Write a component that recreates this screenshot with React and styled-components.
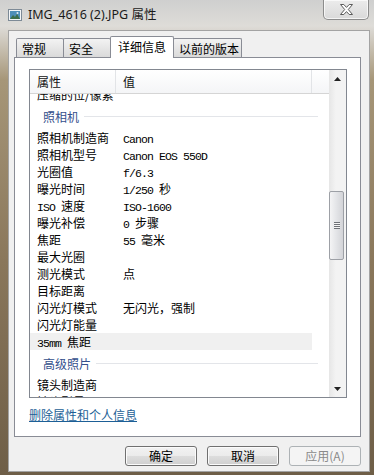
import React from 'react'
import styled, { createGlobalStyle } from 'styled-components'

const cjk = '"Noto Sans CJK SC", "Noto Sans", sans-serif'

const GlobalStyle = createGlobalStyle`
  html, body {
    margin: 0;
    padding: 0;
  }
  body {
    width: 374px;
    height: 475px;
    overflow: hidden;
    font-family: ${cjk};
  }
  * {
    box-sizing: border-box;
  }
`

const rows = [
  { name: '照相机制造商', value: 'Canon' },
  { name: '照相机型号', value: 'Canon EOS 550D' },
  { name: '光圈值', value: 'f/6.3' },
  { name: '曝光时间', value: '1/250 秒' },
  { name: 'ISO 速度', value: 'ISO-1600' },
  { name: '曝光补偿', value: '0 步骤' },
  { name: '焦距', value: '55 毫米' },
  { name: '最大光圈', value: '' },
  { name: '测光模式', value: '点' },
  { name: '目标距离', value: '' },
  { name: '闪光灯模式', value: '无闪光，强制' },
  { name: '闪光灯能量', value: '' },
  { name: '35mm 焦距', value: '', hot: true },
]

const tabs = [
  { label: '常规', width: 48 },
  { label: '安全', width: 48 },
  { label: '详细信息', width: 64, active: true },
  { label: '以前的版本', width: 69 },
]

// wrap ascii runs so they get the narrow fixed-width face
function mixed(text) {
  return text
    .split(/([\x20-\x7e]+)/)
    .filter(Boolean)
    .map((part, i) => (/^[\x20-\x7e]+$/.test(part) ? <Latin key={i}>{part}</Latin> : part))
}

function App() {
  return (
    <>
      <GlobalStyle />
      <Window>
        <TitleBar>
          <TitleIcon width='14' height='12' viewBox='0 0 14 12'>
            <rect x='0.5' y='0.5' width='13' height='11' fill='#f4f6f8' stroke='#7d8a96' />
            <rect x='2' y='2' width='10' height='8' fill='#4f8fb8' />
            <path d='M2 10 L5 6 L7 8 L9 5 L12 10 Z' fill='#3f6f4a' />
            <circle cx='9.5' cy='4' r='1' fill='#e8eef2' />
          </TitleIcon>
          <TitleText>IMG_4616 (2).JPG 属性</TitleText>
          <CloseButton>
            <svg width='15' height='11' viewBox='0 0 15 11'>
              <path
                d='M1.5 0.5 L4.8 0.5 L7.5 3.4 L10.2 0.5 L13.5 0.5 L9.3 5.5 L13.5 10.5 L10.2 10.5 L7.5 7.6 L4.8 10.5 L1.5 10.5 L5.7 5.5 Z'
                fill='#ffffff'
                stroke='#5a5a5a'
                strokeWidth='1'
                strokeLinejoin='round'
              />
            </svg>
          </CloseButton>
        </TitleBar>
        <Client>
          <TabStrip>
            {tabs.map((t) => (
              <Tab key={t.label} $width={t.width} $active={t.active}>
                {t.label}
              </Tab>
            ))}
          </TabStrip>
          <Panel>
            <ListView>
              <ListMain>
                <Header>
                  <HeaderCell $width={86}>属性</HeaderCell>
                  <HeaderCell $width={196}>值</HeaderCell>
                </Header>
                <Body>
                  <BodyInner>
                    <Row>
                      <NameCell>压缩的位/像素</NameCell>
                      <ValueCell />
                    </Row>
                    <GroupRow>
                      <GroupLabel>照相机</GroupLabel>
                      <GroupLine />
                    </GroupRow>
                    {rows.map((r) => (
                      <Row key={r.name} $hot={r.hot}>
                        <NameCell>{mixed(r.name)}</NameCell>
                        <ValueCell>{mixed(r.value)}</ValueCell>
                      </Row>
                    ))}
                    <GroupRow>
                      <GroupLabel>高级照片</GroupLabel>
                      <GroupLine />
                    </GroupRow>
                    <Row>
                      <NameCell>镜头制造商</NameCell>
                      <ValueCell />
                    </Row>
                    <Row>
                      <NameCell>镜头型号</NameCell>
                      <ValueCell />
                    </Row>
                  </BodyInner>
                </Body>
              </ListMain>
              <ScrollBar>
                <Arrow>
                  <svg width='7' height='4' viewBox='0 0 7 4'>
                    <path d='M0 4 L3.5 0 L7 4 Z' fill='#222' />
                  </svg>
                </Arrow>
                <Track>
                  <Thumb $top={104} $height={69}>
                    <Gripper />
                  </Thumb>
                </Track>
                <Arrow>
                  <svg width='7' height='4' viewBox='0 0 7 4'>
                    <path d='M0 0 L7 0 L3.5 4 Z' fill='#222' />
                  </svg>
                </Arrow>
              </ScrollBar>
            </ListView>
            <RemoveLink>删除属性和个人信息</RemoveLink>
          </Panel>
          <ButtonRow>
            <Button>确定</Button>
            <Button>取消</Button>
            <Button disabled>应用(A)</Button>
          </ButtonRow>
        </Client>
      </Window>
    </>
  )
}

export default App

const Window = styled.div`
  width: 374px;
  height: 475px;
  display: flex;
  flex-direction: column;
  background: linear-gradient(
    to bottom,
    #cfcfcf 0px,
    #dedcd8 26px,
    #a69678 80px,
    #8a775b 55%,
    #6e5e47 100%
  );
`

const TitleBar = styled.div`
  height: 30px;
  flex-shrink: 0;
  display: flex;
  align-items: flex-start;
  padding-left: 8px;
`

const TitleIcon = styled.svg`
  margin-top: 9px;
  flex-shrink: 0;
`

const TitleText = styled.span`
  margin: 7px 0 0 6px;
  font: 12.5px/16px 'Noto Sans', 'Noto Sans CJK SC', sans-serif;
  color: #1a1a1a;
  white-space: nowrap;
`

const CloseButton = styled.div`
  margin-left: auto;
  margin-right: 5px;
  width: 46px;
  height: 20px;
  display: flex;
  align-items: center;
  justify-content: center;
  border: 1px solid #8c8c8c;
  border-top: none;
  border-radius: 0 0 5px 5px;
  background: linear-gradient(#ececec, #d9d9d9);
  box-shadow: inset 0 0 0 1px rgba(255, 255, 255, 0.7);
`

const Client = styled.div`
  flex: 1;
  margin: 0 4px 3px 8px;
  background: #f0f0f0;
  border: 1px solid #a3a3a3;
  display: flex;
  flex-direction: column;
  padding: 5px 8px 5px 5px;
`

const TabStrip = styled.div`
  height: 21px;
  display: flex;
  align-items: flex-end;
  padding-left: 2px;
`

const Tab = styled.div`
  position: relative;
  width: ${({ $width }) => $width}px;
  height: ${({ $active }) => ($active ? '22px' : '19px')};
  margin-left: -1px;
  margin-bottom: ${({ $active }) => ($active ? '-1px' : '0')};
  z-index: ${({ $active }) => ($active ? 1 : 0)};
  padding-left: ${({ $active }) => ($active ? '7px' : '5px')};
  border: 1px solid #898c95;
  border-bottom: none;
  border-radius: 2px 2px 0 0;
  background: ${({ $active }) => ($active ? '#ffffff' : 'linear-gradient(#f3f3f3, #e6e6e6 50%, #dadada)')};
  font-size: 12px;
  line-height: ${({ $active }) => ($active ? '20px' : '19px')};
  color: #000;
  white-space: nowrap;

  &:first-child {
    margin-left: 0;
  }
`

const Panel = styled.div`
  height: 380px;
  border: 1px solid #898c95;
  background: #ffffff;
  display: flex;
  flex-direction: column;
  padding: 11px 13px 0 14px;
`

const ListView = styled.div`
  width: 318px;
  height: 329px;
  border: 1px solid #828790;
  display: flex;
  background: #ffffff;
`

const ListMain = styled.div`
  flex: 1;
  min-width: 0;
  display: flex;
  flex-direction: column;
  overflow: hidden;
`

const Header = styled.div`
  height: 24px;
  flex-shrink: 0;
  display: flex;
  border-bottom: 1px solid #d5d5d5;
  background: linear-gradient(#ffffff, #f4f5f7);
`

const HeaderCell = styled.div`
  width: ${({ $width }) => $width}px;
  padding-left: 7px;
  border-right: 1px solid #e2e4e7;
  font-size: 12px;
  line-height: 23px;
  color: #111;
`

const Body = styled.div`
  flex: 1;
  overflow: hidden;
`

const BodyInner = styled.div`
  margin-top: -8px;
`

const Row = styled.div`
  width: 282px;
  height: 17px;
  display: flex;
  background: ${({ $hot }) => ($hot ? '#f0f0f0' : 'transparent')};
  font-size: 12px;
  line-height: 17px;
  color: #000;
  white-space: nowrap;
`

const NameCell = styled.div`
  width: 86px;
  padding-left: 7px;
  overflow: hidden;
`

const ValueCell = styled.div`
  flex: 1;
  padding-left: 7px;
  overflow: hidden;
`

const Latin = styled.span`
  font-family: 'Liberation Mono', monospace;
  font-size: 11.5px;
  letter-spacing: -0.9px;
`

const GroupRow = styled.div`
  width: 288px;
  height: 26px;
  display: flex;
  align-items: center;
  padding-left: 13px;
`

const GroupLabel = styled.span`
  font-size: 12px;
  color: #34508c;
`

const GroupLine = styled.div`
  flex: 1;
  height: 1px;
  margin-left: 5px;
  background: #e3e5e9;
`

const ScrollBar = styled.div`
  width: 17px;
  flex-shrink: 0;
  display: flex;
  flex-direction: column;
  background: linear-gradient(to right, #e6e6e6, #f3f3f3 40%, #f3f3f3);
`

const Arrow = styled.div`
  height: 17px;
  display: flex;
  align-items: center;
  justify-content: center;
`

const Track = styled.div`
  flex: 1;
  position: relative;
`

const Thumb = styled.div`
  margin: ${({ $top }) => $top}px 2px 0 0;
  height: ${({ $height }) => $height}px;
  border: 1px solid #9da0a6;
  border-radius: 2px;
  background: linear-gradient(to right, #f4f4f5, #e3e4e7 50%, #d3d4d8);
  display: flex;
  align-items: center;
  justify-content: center;
`

const Gripper = styled.div`
  width: 6px;
  height: 7px;
  background: repeating-linear-gradient(#6f7278 0 1px, #f4f4f4 1px 2px);
`

const RemoveLink = styled.a`
  margin-top: 9px;
  align-self: flex-start;
  font-size: 12px;
  line-height: 16px;
  color: #1d5f96;
  text-decoration: underline;
  cursor: pointer;
`

const ButtonRow = styled.div`
  margin-top: 9px;
  display: flex;
  justify-content: flex-end;
  gap: 10px;
`

const Button = styled.button`
  width: 72px;
  height: 20px;
  padding: 0;
  border: 1px solid #707070;
  border-radius: 3px;
  background: linear-gradient(#f2f2f2 0%, #ebebeb 50%, #dddddd 51%, #cfcfcf 100%);
  box-shadow: inset 0 0 0 1px #fbfbfb;
  font-family: ${cjk};
  font-size: 12px;
  line-height: 18px;
  color: #000;

  &:disabled {
    border-color: #adb2b5;
    background: #f4f4f4;
    box-shadow: none;
    color: #8a8a8a;
  }
`
